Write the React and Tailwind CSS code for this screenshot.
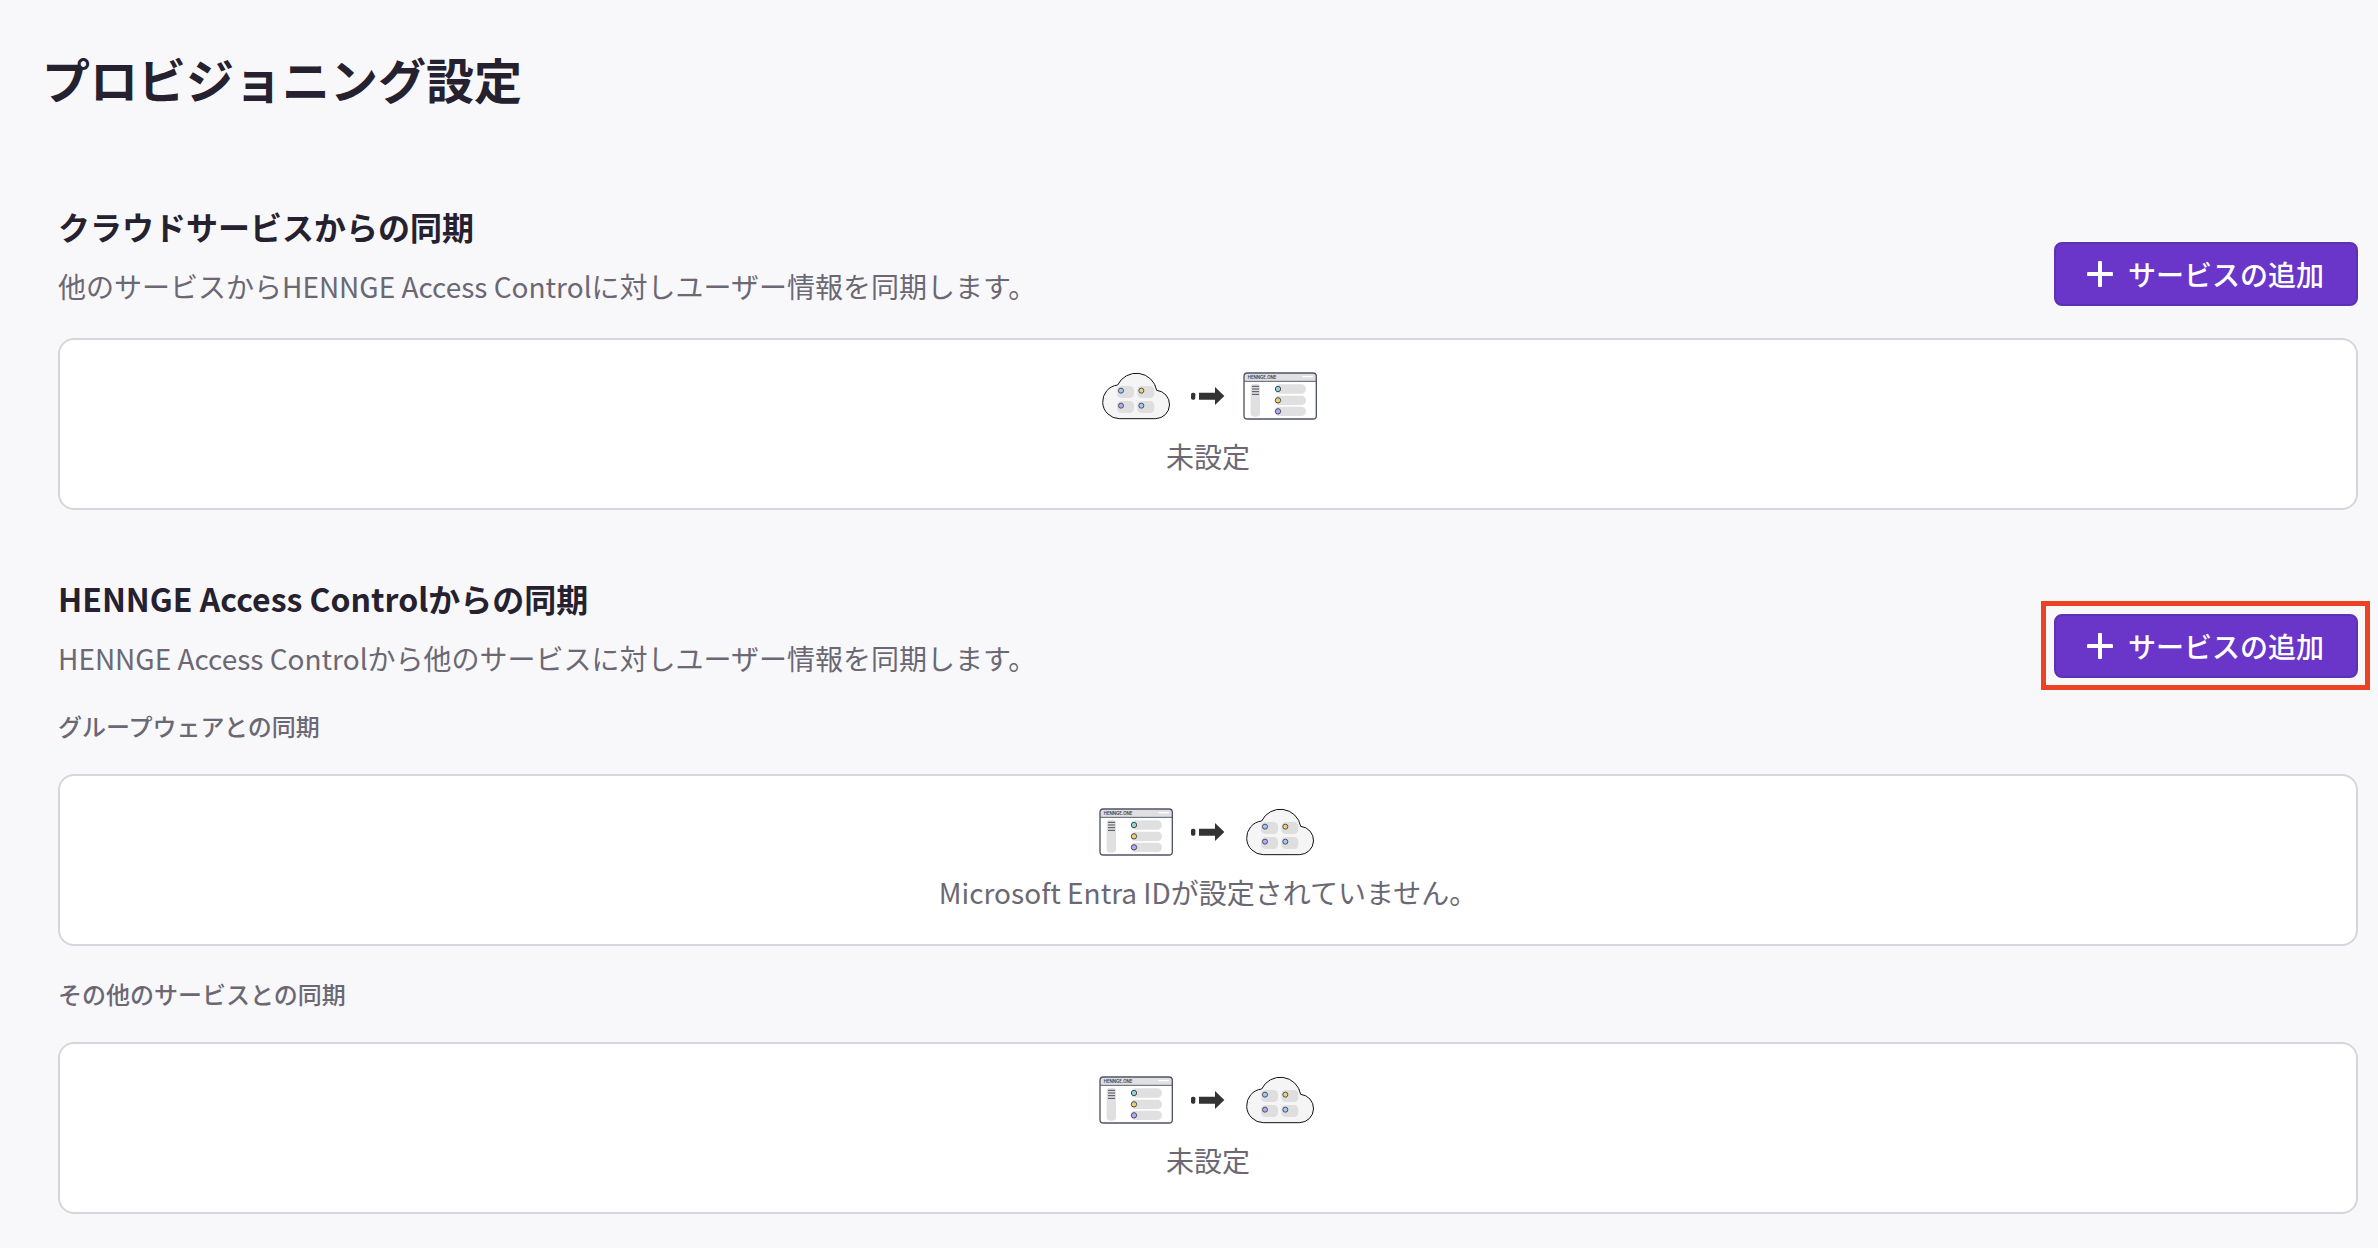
import { clsx } from 'clsx';

function CloudIcon() {
    const apps = [
        { x: 54, y: 42, color: '#a5c8f7' },
        { x: 115, y: 42, color: '#f5cf6c' },
        { x: 54, y: 87, color: '#b5aaf5' },
        { x: 115, y: 87, color: '#a5c8f7' },
    ];

    return (
        <svg viewBox="0 0 222 144" className="w-[74px] h-12" aria-hidden="true">
            <path
                d="M61 140 A50.66 50.66 0 0 1 56 39 A62 62 0 0 1 173 55 A42.6 42.6 0 0 1 170 140 Z"
                fill="#f5f5f5"
                stroke="#111111"
                strokeWidth="3"
            />
            {apps.map(({ x, y, color }) => (
                <g key={`${x}-${y}`}>
                    <rect x={x} y={y} width="51" height="36" rx="13" fill="#dedede" />
                    <circle cx={x + 12} cy={y + 14} r="7.5" fill={color} stroke="#4a4e63" strokeWidth="3" />
                </g>
            ))}
        </svg>
    );
}

function BrowserIcon() {
    const rows = [
        { y: 37, color: '#8fd8cc' },
        { y: 71, color: '#f5cf6c' },
        { y: 104, color: '#b5aaf5' },
    ];

    return (
        <svg viewBox="0 0 222 144" className="w-[74px] h-12" aria-hidden="true">
            <rect x="3" y="3" width="217" height="138" rx="10" fill="#ffffff" />
            <path d="M3 28 V13 A10 10 0 0 1 13 3 H210 A10 10 0 0 1 220 13 V28 Z" fill="#e0dfe2" />
            <path d="M3 28 H220" stroke="#5a5f70" strokeWidth="3" />
            <rect x="3" y="3" width="217" height="138" rx="10" fill="none" stroke="#4f5465" strokeWidth="4" />
            <text x="14" y="20" fontSize="13" fontWeight="600" fill="#3a3a45" fontFamily="Inter, sans-serif">
                HENNGE.ONE
            </text>
            <path d="M180 14 H208" stroke="#ffffff" strokeWidth="4" strokeLinecap="round" />
            <rect x="23" y="36" width="28" height="98" rx="10" fill="#e0e0e0" />
            <path d="M27 43 H48 M27 51 H48 M27 59 H48 M27 67 H48" stroke="#4a4e5c" strokeWidth="3" />
            {rows.map(({ y, color }) => (
                <g key={y}>
                    <rect x="95" y={y} width="94" height="28" rx="14" fill="#e0e0e0" />
                    <circle cx="105" cy={y + 14} r="8" fill={color} stroke="#4a4e63" strokeWidth="3" />
                </g>
            ))}
        </svg>
    );
}

function ArrowIcon() {
    return (
        <svg viewBox="0 0 102 60" className="w-[34px] h-5" aria-hidden="true">
            <rect x="0" y="20" width="13" height="21" rx="5" fill="#333333" />
            <path d="M24 20 H72 V3 L100 30 L72 57 V41 H24 Z" fill="#333333" />
        </svg>
    );
}

function EmptyCard({ from, to, message }) {
    const From = from;
    const To = to;

    return (
        <div className="flex flex-col items-center rounded-2xl border-2 border-[#d6d5dc] bg-white pt-8 pb-8">
            <div className="flex items-center gap-[18px]">
                <From />
                <ArrowIcon />
                <To />
            </div>
            <p className="mt-4 text-[28px] leading-10 text-[#6b6874]">{message}</p>
        </div>
    );
}

function AddServiceButton({ highlighted }) {
    return (
        <div className="relative shrink-0">
            <button
                type="button"
                className="flex h-16 items-center gap-[15px] rounded-lg border-2 border-[#5d31b0] bg-[#6936c9] pr-8 pl-[31px] text-[28px] font-medium text-white"
            >
                <svg viewBox="0 0 26 26" className="size-[26px]" aria-hidden="true">
                    <path d="M13 1.5 V24.5 M1.5 13 H24.5" stroke="currentColor" strokeWidth="4" strokeLinecap="round" />
                </svg>
                サービスの追加
            </button>
            {highlighted && (
                <div className="pointer-events-none absolute -top-[13px] -right-3 -bottom-3 -left-[13px] border-5 border-[#ed4123]" />
            )}
        </div>
    );
}

function SectionHeader({ title, description, highlighted }) {
    return (
        <div className="flex items-end justify-between gap-8">
            <div>
                <h2 className="text-[32px] leading-12 font-bold text-[#25212f]">{title}</h2>
                <p className="mt-4 text-[28px] leading-10 text-[#6b6874]">{description}</p>
            </div>
            <AddServiceButton highlighted={highlighted} />
        </div>
    );
}

const outgoing = [
    { label: 'グループウェアとの同期', message: 'Microsoft Entra IDが設定されていません。' },
    { label: 'その他のサービスとの同期', message: '未設定' },
];

export default function App() {
    return (
        <main
            lang="ja"
            className={clsx(
                'min-h-screen bg-[#f8f8fb] pt-[42px] pr-5 pb-8 pl-[42px]',
                "font-['Noto_Sans_CJK_JP',sans-serif]"
            )}
        >
            <h1 className="text-5xl leading-[72px] font-bold text-[#25212f]">プロビジョニング設定</h1>

            <div className="mt-[88px] pl-4">
                <section>
                    <SectionHeader
                        title="クラウドサービスからの同期"
                        description="他のサービスからHENNGE Access Controlに対しユーザー情報を同期します。"
                    />
                    <div className="mt-8">
                        <EmptyCard from={CloudIcon} to={BrowserIcon} message="未設定" />
                    </div>
                </section>

                <section className="mt-16">
                    <SectionHeader
                        title="HENNGE Access Controlからの同期"
                        description="HENNGE Access Controlから他のサービスに対しユーザー情報を同期します。"
                        highlighted
                    />
                    {outgoing.map(({ label, message }) => (
                        <div key={label} className="mt-8">
                            <h3 className="mb-8 text-2xl leading-8 font-medium text-[#6b6874]">{label}</h3>
                            <EmptyCard from={BrowserIcon} to={CloudIcon} message={message} />
                        </div>
                    ))}
                </section>
            </div>
        </main>
    );
}
